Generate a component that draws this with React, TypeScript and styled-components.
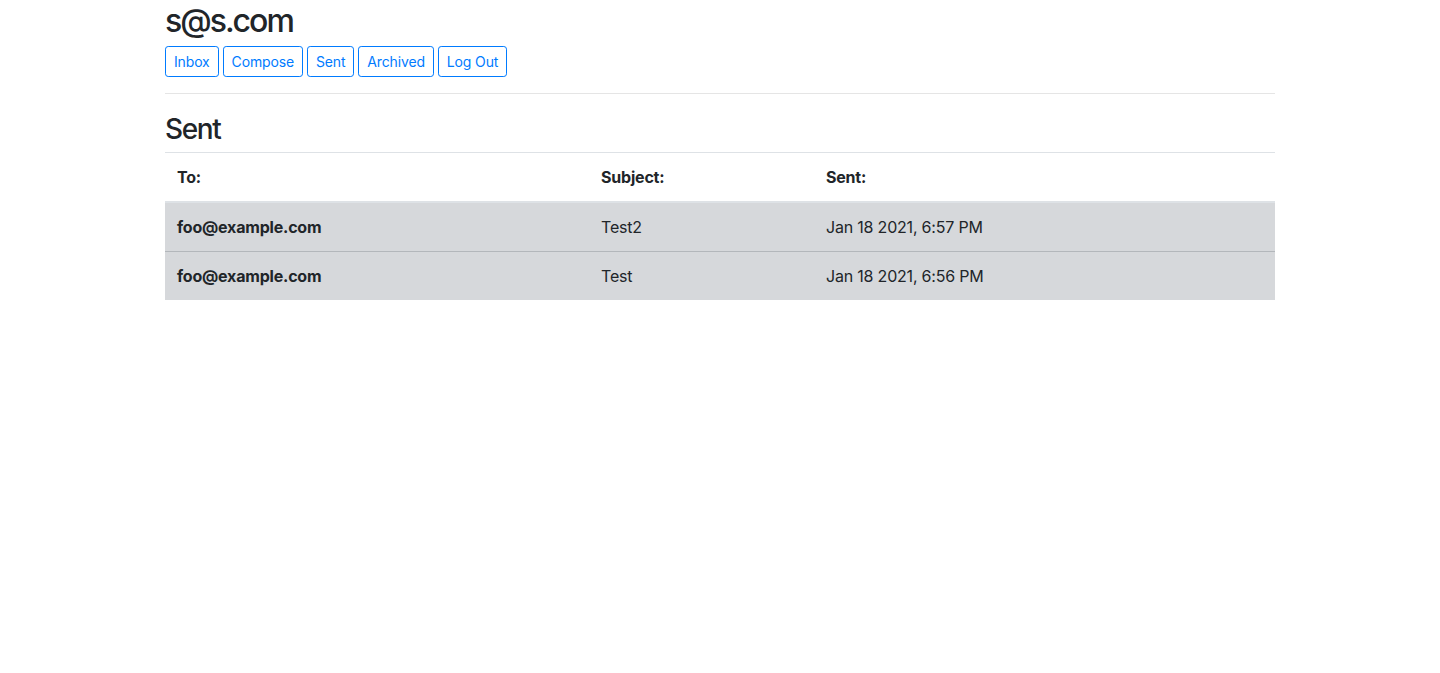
import React from "react";
import styled, { createGlobalStyle } from "styled-components";

const GlobalStyle = createGlobalStyle`
  *, *::before, *::after {
    box-sizing: border-box;
  }
  body {
    margin: 0;
    font-family: Inter, "Liberation Sans", sans-serif;
    font-size: 16px;
    line-height: 1.5;
    letter-spacing: -0.2px;
    color: #212529;
    background-color: #fff;
  }
`;

const Container = styled("div")`
  max-width: 1140px;
  margin: 0 auto;
  padding: 0 15px;
`;

const UserTitle = styled("h2")`
  margin: 0 0 0.5rem;
  padding-top: 2px;
  height: 38px;
  font-size: 2rem;
  font-weight: 500;
  line-height: 1.2;
  letter-spacing: -2px;
`;

const Nav = styled("div")`
  display: flex;
  gap: 4px;
`;

const NavButton = styled("button")`
  font-family: inherit;
  font-size: 0.875rem;
  line-height: 1.5;
  padding: 0.25rem 0.5rem;
  color: #007bff;
  background: transparent;
  border: 1px solid #007bff;
  border-radius: 0.2rem;
  cursor: pointer;
  letter-spacing: -0.15px;
  &:hover {
    color: #fff;
    background-color: #007bff;
  }
`;

const Rule = styled("hr")`
  margin: 1rem 0;
  border: 0;
  border-top: 1px solid rgba(0, 0, 0, 0.1);
`;

const ViewTitle = styled("h3")`
  margin: 0 0 0.5rem;
  padding-top: 3px;
  height: 34px;
  font-size: 1.75rem;
  font-weight: 500;
  line-height: 1.2;
  letter-spacing: -1.4px;
`;

const Table = styled("table")`
  width: 100%;
  border-collapse: collapse;
  color: #212529;
`;

const HeadCell = styled("th")<{ $width?: string }>`
  width: ${(p) => p.$width || "auto"};
  text-align: left;
  padding: 0.75rem;
  font-size: 1rem;
  font-weight: 700;
  border-top: 1px solid #dee2e6;
  border-bottom: 2px solid #dee2e6;
  vertical-align: bottom;
`;

const MailRow = styled("tr")<{ $read?: boolean }>`
  background-color: ${(p) => (p.$read ? "#d6d8db" : "#fff")};
  & + & td {
    border-top: 1px solid #b3b7bb;
  }
`;

const Cell = styled("td")<{ $bold?: boolean }>`
  padding: 0.75rem;
  font-weight: ${(p) => (p.$bold ? 700 : 400)};
  vertical-align: top;
`;

const emails = [
  { to: "foo@example.com", subject: "Test2", sent: "Jan 18 2021, 6:57 PM" },
  { to: "foo@example.com", subject: "Test", sent: "Jan 18 2021, 6:56 PM" },
];

const App = () => {
  return (
    <>
      <GlobalStyle />
      <Container>
        <UserTitle>s@s.com</UserTitle>
        <Nav>
          <NavButton>Inbox</NavButton>
          <NavButton>Compose</NavButton>
          <NavButton>Sent</NavButton>
          <NavButton>Archived</NavButton>
          <NavButton>Log Out</NavButton>
        </Nav>
        <Rule />
        <ViewTitle>Sent</ViewTitle>
        <Table>
          <thead>
            <tr>
              <HeadCell $width="424px">To:</HeadCell>
              <HeadCell $width="225px">Subject:</HeadCell>
              <HeadCell>Sent:</HeadCell>
            </tr>
          </thead>
          <tbody>
            {emails.map((email, i) => (
              <MailRow key={i} $read>
                <Cell $bold>{email.to}</Cell>
                <Cell>{email.subject}</Cell>
                <Cell>{email.sent}</Cell>
              </MailRow>
            ))}
          </tbody>
        </Table>
      </Container>
    </>
  );
};

export default App;
